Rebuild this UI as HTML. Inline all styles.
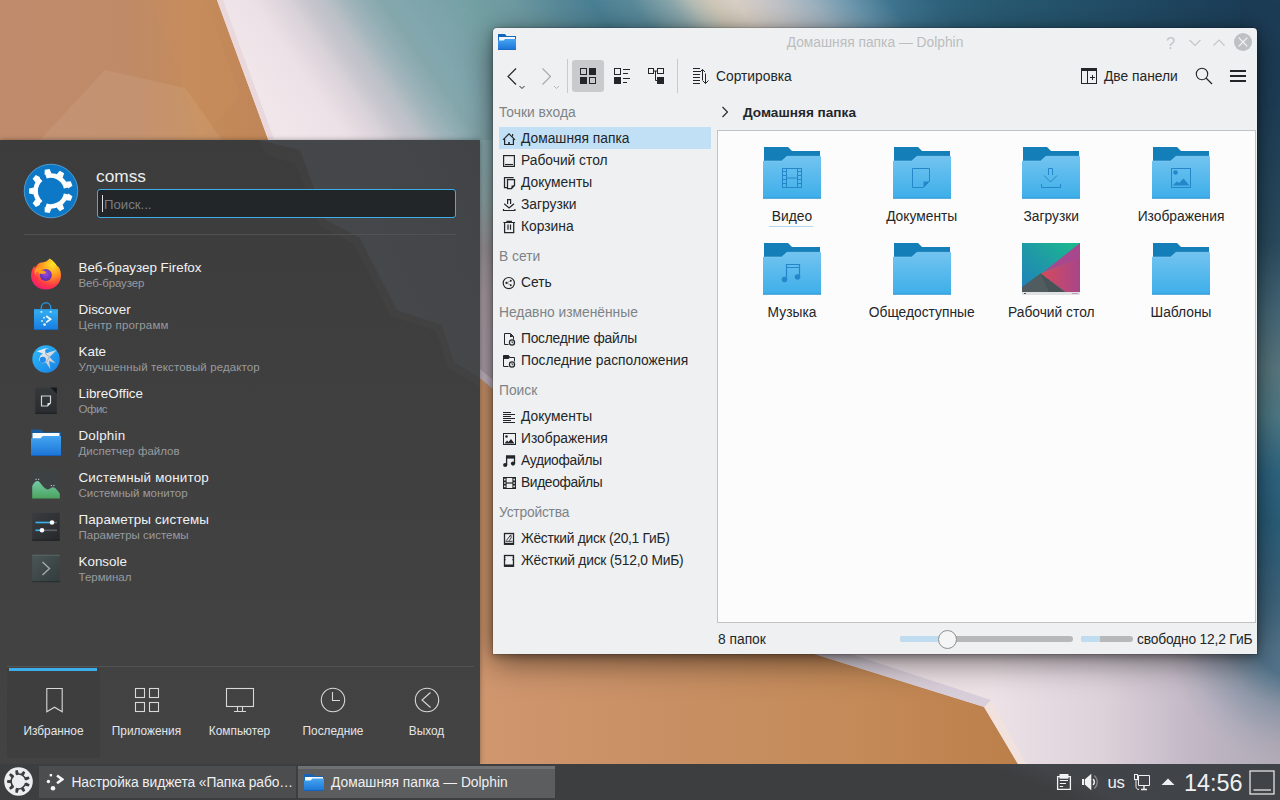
<!DOCTYPE html>
<html lang="ru">
<head>
<meta charset="utf-8">
<title>Домашняя папка — Dolphin</title>
<style>
*{box-sizing:border-box;margin:0;padding:0}
html,body{width:1280px;height:800px;overflow:hidden;background:#c08a60}
body{font-family:"Liberation Sans","DejaVu Sans",sans-serif;font-size:13.8px;color:#232629;position:relative}
.abs{position:absolute;white-space:nowrap}
#wall{position:absolute;left:0;top:0;width:1280px;height:800px}
/* ---------- Dolphin window ---------- */
#win{position:absolute;left:493px;top:28px;width:764px;height:626px;background:#eff0f1;border-radius:4px 4px 0 0;box-shadow:0 7px 32px rgba(0,0,0,.55),0 2px 9px rgba(0,0,0,.32),0 0 0 1px rgba(0,0,0,.10)}
#title{position:absolute;left:0;top:0;width:764px;height:30px;text-align:center;line-height:30px;color:#bbbdbf;font-size:13.8px}
.side-h{position:absolute;left:6px;color:#7d8387;height:18px;line-height:20px;white-space:nowrap}
.side-i{position:absolute;left:6px;width:212px;height:22px;line-height:24px;padding-left:22px;white-space:nowrap}
.side-i.sel{background:#c2e0f5}
.side-i svg{position:absolute;left:2px;top:4px;width:16px;height:16px}
#view{position:absolute;left:224px;top:102px;width:539px;height:493px;background:#fcfcfc;border:1px solid #c0c2c4}
.fi{position:absolute;width:130px;height:96px;text-align:center;white-space:nowrap}
.fi svg{display:block;margin:0 auto}
.fi span{position:absolute;left:0;right:0;top:69px;line-height:18px}
.fi .ul{position:absolute;left:42px;width:44px;top:87px;height:1px;background:#b3d7f1}
.tb{position:absolute}
/* ---------- Kickoff menu ---------- */
#menu{position:absolute;left:0;top:140px;width:480px;height:624px;background:linear-gradient(180deg,#3c3c3d 0,#404040 50%,#434343 100%);color:#eff0f1;overflow:hidden;box-shadow:0 0 5px rgba(0,0,0,.35)}
.app{position:absolute;left:30px;height:42px;white-space:nowrap}
.app .t{position:absolute;left:48.5px;top:5.5px;line-height:17px;font-size:13.4px;color:#f1f2f3}
.app .s{position:absolute;left:48.5px;top:22.8px;line-height:15px;font-size:11.5px;color:#989b9e}
.app svg{position:absolute;left:0;top:5px;width:32px;height:32px}
.tab{position:absolute;top:531px;width:93px;height:87px;text-align:center;font-size:11.85px;color:#e4e5e6}
.tab span{position:absolute;left:-10px;right:-10px;top:52px;line-height:16px}
.tab svg{position:absolute;left:30.500px;top:13px;width:32px;height:32px}
/* ---------- Panel ---------- */
#panel{position:absolute;left:0;top:764px;width:1280px;height:36px;background:linear-gradient(21.8deg,#3d3e3f 0,#3d3e3f 78.5%,#414449 82%,#3f4247 100%);color:#eff0f1}
.task{position:absolute;top:2px;height:32px;width:257px;line-height:33px;font-size:13.8px;white-space:nowrap;overflow:hidden;color:#eff0f1}
.task span{position:absolute;left:33px;top:0}

</style>
</head>
<body>
<svg id="wall" viewBox="0 0 1280 800">
<defs>
<linearGradient id="gTop" gradientUnits="userSpaceOnUse" x1="190" y1="0" x2="921.5" y2="-512.1">
<stop offset="0.005" stop-color="#f1e7eb"/><stop offset="0.055" stop-color="#ece1e6"/><stop offset="0.089" stop-color="#d9d2d9"/><stop offset="0.107" stop-color="#c7c5cd"/><stop offset="0.124" stop-color="#bbc0c7"/><stop offset="0.141" stop-color="#a3b6bc"/><stop offset="0.158" stop-color="#92aeb4"/><stop offset="0.176" stop-color="#84a7ac"/><stop offset="0.193" stop-color="#82a7ae"/><stop offset="0.226" stop-color="#7ba3a9"/><stop offset="0.259" stop-color="#73a0a3"/><stop offset="0.294" stop-color="#6e9aa2"/><stop offset="0.330" stop-color="#5a8c9a"/><stop offset="0.367" stop-color="#4a8094"/><stop offset="0.404" stop-color="#5a8a9a"/><stop offset="0.440" stop-color="#8aa7ab"/><stop offset="0.459" stop-color="#b5bdb5"/><stop offset="0.477" stop-color="#cfc8b8"/><stop offset="0.5" stop-color="#d9d0c5"/><stop offset="0.532" stop-color="#c5c5c8"/><stop offset="0.569" stop-color="#9fb3c0"/><stop offset="0.606" stop-color="#6b97ae"/><stop offset="0.642" stop-color="#3f7590"/><stop offset="0.688" stop-color="#2f627c"/><stop offset="0.734" stop-color="#285a72"/><stop offset="0.826" stop-color="#234f68"/><stop offset="0.917" stop-color="#1e435c"/><stop offset="0.991" stop-color="#1b3a55"/>
</linearGradient>
<linearGradient id="gRight" x1="0" y1="0" x2="0" y2="1">
<stop offset="0" stop-color="#1c3b55"/><stop offset="0.13" stop-color="#1e3f58"/><stop offset="0.3" stop-color="#2a4c60"/>
<stop offset="0.39" stop-color="#456878"/><stop offset="0.46" stop-color="#5a7880"/><stop offset="0.52" stop-color="#4e7a86"/>
<stop offset="0.59" stop-color="#2f6682"/><stop offset="0.65" stop-color="#2a5f7b"/><stop offset="0.70" stop-color="#33607a"/>
<stop offset="0.75" stop-color="#3d647c"/><stop offset="0.81" stop-color="#52738a"/><stop offset="0.85" stop-color="#5a788e"/><stop offset="0.915" stop-color="#8a98a8"/>
<stop offset="0.97" stop-color="#b5a8b0"/><stop offset="1" stop-color="#c0b0b5"/>
</linearGradient>
<linearGradient id="gBot" gradientUnits="userSpaceOnUse" x1="990" y1="0" x2="1290" y2="0">
<stop offset="0" stop-color="#ede2e6"/><stop offset="0.2" stop-color="#e4d9e0"/><stop offset="0.37" stop-color="#ddd2da"/>
<stop offset="0.53" stop-color="#cfc5d0"/><stop offset="0.7" stop-color="#c0b6c4"/><stop offset="0.87" stop-color="#b5aebb"/><stop offset="1" stop-color="#b2a9b4"/>
</linearGradient>
<radialGradient id="gBlu" gradientUnits="userSpaceOnUse" cx="1300" cy="630" r="135">
<stop offset="0" stop-color="#52738a" stop-opacity="1"/><stop offset="0.36" stop-color="#52738a" stop-opacity="1"/><stop offset="0.6" stop-color="#5d7b90" stop-opacity=".45"/><stop offset="0.85" stop-color="#62809a" stop-opacity=".1"/><stop offset="1" stop-color="#62809a" stop-opacity="0"/>
</radialGradient>
<linearGradient id="gOr" gradientUnits="userSpaceOnUse" x1="0" y1="0" x2="260" y2="0">
<stop offset="0" stop-color="#c08b6d"/><stop offset="0.5" stop-color="#bf8a66"/><stop offset="0.75" stop-color="#c48b5b"/><stop offset="1" stop-color="#c18657"/>
</linearGradient>
<linearGradient id="gOr2" gradientUnits="userSpaceOnUse" x1="480" y1="0" x2="1020" y2="0">
<stop offset="0" stop-color="#d0976f"/><stop offset="0.35" stop-color="#c88f64"/><stop offset="0.7" stop-color="#c48a58"/><stop offset="1" stop-color="#bb7f4a"/>
</linearGradient>
<linearGradient id="gMid" gradientUnits="userSpaceOnUse" x1="0" y1="140" x2="0" y2="380">
<stop offset="0" stop-color="#8cb0b4"/><stop offset="0.25" stop-color="#93abad"/><stop offset="0.45" stop-color="#a09a9e"/><stop offset="0.65" stop-color="#b0a3aa"/><stop offset="1" stop-color="#b5a6b0"/>
</linearGradient>
</defs>
<rect x="0" y="0" width="1280" height="800" fill="url(#gTop)"/>
<rect x="1240" y="0" width="40" height="800" fill="url(#gRight)"/>
<polygon points="700,648 1280,648 1280,800 700,800" fill="url(#gBot)"/>
<rect x="1100" y="648" width="180" height="152" fill="url(#gBlu)"/>
<rect x="470" y="140" width="30" height="260" fill="url(#gMid)"/>
<polygon points="0,0 217,0 268,139 300,230.5 817,655 984,707 1023,772 1023,800 0,800" fill="url(#gOr)"/>
<polygon points="40,140 105,70 185,88 222,140" fill="#fff" opacity=".07"/>
<polygon points="150,0 205,0 240,95 200,140 175,60" fill="#e0a060" opacity=".10"/>
<polygon points="470,370 817,655 984,707 1023,772 1023,800 470,800" fill="url(#gOr2)"/>
<polygon points="460,352.8 500,385.7 500,394.7 460,361.8" fill="#cdbecb"/>
<polygon points="217,0 223,0 274,139 268,139" fill="#ead9dc"/>
<polygon points="984,707 1019,766 1027,766 991,700" fill="#f1e2de"/>
<polygon points="768,640 817,655 984,707 991,700 808,640" fill="#d9cfda"/>
</svg>
<svg width="0" height="0" style="position:absolute">
<defs>
<linearGradient id="fg" x1="0" y1="0" x2="0" y2="1"><stop offset="0" stop-color="#72c4f0"/><stop offset="1" stop-color="#3daee9"/></linearGradient>
<linearGradient id="dg" x1="0" y1="1" x2="1" y2="0"><stop offset="0" stop-color="#1f7fbf"/><stop offset=".5" stop-color="#1f9aa5"/><stop offset="1" stop-color="#1abc8c"/></linearGradient>
<linearGradient id="dr" x1="0" y1="0" x2="1" y2="0"><stop offset="0" stop-color="#d64a5a"/><stop offset="1" stop-color="#a8468a"/></linearGradient>
<linearGradient id="dfg" x1="0" y1="0" x2="0" y2="1"><stop offset="0" stop-color="#45a5f3"/><stop offset="1" stop-color="#1b74d6"/></linearGradient>
</defs>
</svg>
<div id="win">
<div id="title">Домашняя папка — Dolphin</div>
<!-- window icon -->
<svg class="tb" style="left:4px;top:5px" width="20" height="18" viewBox="0 0 20 18"><path d="M1 1h7l1.5 2H19v6H1z" fill="#1466b8"/><path d="M2 4h16v4H2z" fill="#f4f6f8"/><path d="M1 7.400h5.700l1.3-1.300H19V16.800H1z" fill="url(#dfg)"/><path d="M1 16h18v.8H1z" fill="#1462c0"/></svg>
<!-- title buttons -->
<svg class="tb" style="left:668px;top:5px" width="96" height="20" viewBox="0 0 96 20"><text x="9.5" y="15.5" font-family="Liberation Sans, sans-serif" font-size="16.5" fill="#c4c6c8" text-anchor="middle">?</text><path d="M28.5 7l5.5 5.5 5.5-5.5" fill="none" stroke="#c4c6c8" stroke-width="1.2"/><path d="M52.5 12.5 58 7l5.5 5.5" fill="none" stroke="#c4c6c8" stroke-width="1.2"/><circle cx="82" cy="9" r="9" fill="#bec1c3"/><path d="M77.7 4.700l8.6 8.600M86.3 4.700l-8.6 8.6" stroke="#f6f7f7" stroke-width="1.1"/></svg>
<!-- back / forward -->
<svg class="tb" style="left:12px;top:38px" width="60" height="26" viewBox="0 0 60 26"><path d="M11 2.5 3 10.500l8 8" fill="none" stroke="#232629" stroke-width="1.2"/><path d="M14.5 20l2.5 2.5 2.5-2.5" fill="none" stroke="#232629" stroke-width="1"/><path d="M37.5 2.500l8 8-8 8" fill="none" stroke="#a8aaac" stroke-width="1.2"/><path d="M49 20l2.5 2.500L54 20" fill="none" stroke="#b5b7b9" stroke-width="1"/></svg>
<div class="tb" style="left:74px;top:31px;width:1px;height:34px;background:#c8cacc"></div>
<div class="tb" style="left:79px;top:32px;width:32px;height:32px;border-radius:3px;background:#c9cacb"></div>
<!-- icons view -->
<svg class="tb" style="left:87px;top:40px" width="16" height="16" viewBox="0 0 16 16"><rect x=".5" y=".5" width="6" height="6" fill="none" stroke="#232629"/><rect x="9" y="0" width="7" height="7" fill="#232629"/><rect x="0" y="9" width="7" height="7" fill="#232629"/><rect x="9.5" y="9.5" width="6" height="6" fill="none" stroke="#232629"/></svg>
<!-- details view -->
<svg class="tb" style="left:121px;top:40px" width="17" height="16" viewBox="0 0 17 16"><rect x=".5" y=".5" width="6" height="6" fill="none" stroke="#232629"/><rect x="0" y="9" width="7" height="7" fill="#232629"/><path d="M9 1.500h7M9 5.500h5M9 10.500h7M9 14.500h4" stroke="#232629"/></svg>
<!-- tree view -->
<svg class="tb" style="left:155px;top:40px" width="17" height="16" viewBox="0 0 17 16"><rect x=".5" y=".5" width="5" height="5" fill="none" stroke="#232629"/><rect x="9.5" y=".5" width="6" height="5" fill="none" stroke="#232629"/><rect x="9" y="9" width="7" height="7" fill="#232629"/><path d="M6 3h3.500M7.5 3v9.500H9" fill="none" stroke="#232629"/></svg>
<div class="tb" style="left:184px;top:31px;width:1px;height:34px;background:#c8cacc"></div>
<!-- sort -->
<svg class="tb" style="left:200px;top:40px" width="17" height="17" viewBox="0 0 17 17"><path d="M0 .5h7M0 3.500h7M0 6.500h7M0 9.500h7M0 12.500h7M0 15.500h7" stroke="#232629" stroke-width="1"/><path d="M9.5 1.500v10.500M7 4l2.5-2.500L12 4" fill="none" stroke="#232629"/><path d="M12.5 5.500V15.500M9.5 12.500l3 3 3-3" fill="none" stroke="#232629"/></svg>
<span class="abs" style="left:223px;top:40px;line-height:18px">Сортировка</span>
<!-- two panels -->
<svg class="tb" style="left:588px;top:40px" width="16" height="16" viewBox="0 0 16 16"><rect x=".5" y=".5" width="15" height="15" fill="none" stroke="#232629"/><path d="M0 0h16v3H0z" fill="#232629"/><path d="M6.5 3v13" stroke="#232629"/><path d="M9 9.500h5M11.5 7v5" stroke="#232629"/></svg>
<span class="abs" style="left:611px;top:40px;line-height:18px">Две панели</span>
<!-- search -->
<svg class="tb" style="left:702px;top:39px" width="18" height="18" viewBox="0 0 18 18"><circle cx="7" cy="7" r="5.7" fill="none" stroke="#232629" stroke-width="1.1"/><path d="M11 11l6 6" stroke="#232629" stroke-width="1.3"/></svg>
<!-- hamburger -->
<svg class="tb" style="left:737px;top:41px" width="16" height="14" viewBox="0 0 16 14"><path d="M0 2h16M0 7h16M0 12h16" stroke="#232629" stroke-width="2"/></svg>
<!-- breadcrumb -->
<svg class="tb" style="left:228px;top:78px" width="8" height="12" viewBox="0 0 8 12"><path d="M1.5 1l5 5-5 5" fill="none" stroke="#232629" stroke-width="1.1"/></svg>
<span class="abs" style="left:250px;top:76px;line-height:18px;font-weight:bold;font-size:13.6px">Домашняя папка</span>

<div class="side-h" style="top:75px">Точки входа</div>
<div class="side-i sel" style="top:99px"><svg viewBox="0 0 16 16"><path d="M2 8.8 8 2.800l6 6" fill="none" stroke="#232629" stroke-width="1.2"/><path d="M3.6 7.800v5.700h8.800V7.8" fill="none" stroke="#232629" stroke-width="1.2"/><path d="M7.2 13.500v-2.500h1.600v2.500z" fill="#232629"/><path d="M11.6 3v2.6" stroke="#232629" stroke-width="1.1"/></svg>Домашняя папка</div>
<div class="side-i" style="top:121px"><svg viewBox="0 0 16 16"><rect x="2.6" y="2.6" width="10.8" height="10.8" fill="none" stroke="#232629" stroke-width="1.2"/><path d="M4 11.500h8" stroke="#232629" stroke-width="1.1"/></svg>Рабочий стол</div>
<div class="side-i" style="top:143px"><svg viewBox="0 0 16 16"><path d="M12.6 2.500H3.500v10h2.5" fill="none" stroke="#232629" stroke-width="1.250"/><path d="M6.5 4.500h7v6l-3 3h-4z" fill="none" stroke="#232629" stroke-width="1.250"/><path d="M13.5 10.500h-3v3z" fill="#232629"/></svg>Документы</div>
<div class="side-i" style="top:165px"><svg viewBox="0 0 16 16"><path d="M6.6 7V2.600h3V7" fill="none" stroke="#232629" stroke-width="1.2"/><path d="M3.2 6.7 8.1 11l4.9-4.3" fill="none" stroke="#232629" stroke-width="1.250"/><path d="M2.5 12v1.500h11.400V12" fill="none" stroke="#232629" stroke-width="1.2"/></svg>Загрузки</div>
<div class="side-i" style="top:187px"><svg viewBox="0 0 16 16"><path d="M3.6 3.500v10h9.100v-10" fill="none" stroke="#232629" stroke-width="1.250"/><path d="M2.4 3.500H14M6 3.500V2.300h4.300v1.2" fill="none" stroke="#232629" stroke-width="1.2"/><path d="M7 5.500v5.200M9.5 5.500v5.2" fill="none" stroke="#232629" stroke-width="1.2"/></svg>Корзина</div>
<div class="side-h" style="top:219px">В сети</div>
<div class="side-i" style="top:243px"><svg viewBox="0 0 16 16"><circle cx="7.8" cy="8.1" r="5.6" fill="none" stroke="#232629" stroke-width="1.2"/><circle cx="5.4" cy="7.9" r="1.050" fill="#232629"/><circle cx="9.8" cy="5.8" r=".95" fill="#232629"/><circle cx="9.8" cy="10.2" r=".95" fill="#232629"/><path d="M5.4 7.9 9.8 5.800M5.4 7.9 9.8 10.2" stroke="#232629" stroke-width=".45"/></svg>Сеть</div>
<div class="side-h" style="top:275px">Недавно изменённые</div>
<div class="side-i" style="top:299px;letter-spacing:-0.24px"><svg viewBox="0 0 16 16"><path d="M3.5 13.500v-11h6l3 3v3" fill="none" stroke="#232629"/><path d="M9 2.500v3.500h3.500z" fill="#232629"/><path d="M3.5 13.500h4" stroke="#232629"/><circle cx="11" cy="11.5" r="2.6" fill="none" stroke="#232629" stroke-width="1.2"/><path d="M11 10v1.700h1.4" fill="none" stroke="#232629" stroke-width=".8"/></svg>Последние файлы</div>
<div class="side-i" style="top:321px"><svg viewBox="0 0 16 16"><path d="M2.5 13.500v-11h5l1.5 2h4.500v4" fill="none" stroke="#232629"/><path d="M2.5 2.500h5l1.5 2-1.5 1.500h-5z" fill="#232629"/><path d="M2.5 13.500h5" stroke="#232629"/><circle cx="11" cy="11.5" r="2.6" fill="none" stroke="#232629" stroke-width="1.2"/><path d="M11 10v1.700h1.4" fill="none" stroke="#232629" stroke-width=".8"/></svg>Последние расположения</div>
<div class="side-h" style="top:353px">Поиск</div>
<div class="side-i" style="top:377px"><svg viewBox="0 0 16 16"><path d="M2 3.500h8M2 5.500h12M2 7.500h8M2 9.500h12M2 11.500h8M2 13.500h12" stroke="#232629" stroke-width="1"/></svg>Документы</div>
<div class="side-i" style="top:399px"><svg viewBox="0 0 16 16"><rect x="2.5" y="2.5" width="12" height="11" fill="none" stroke="#232629"/><circle cx="5.5" cy="5.5" r="1.3" fill="#232629"/><path d="M3.5 12.500l2.5-3 1.5 1.5 2.5-3 3.5 4.500z" fill="#232629"/></svg>Изображения</div>
<div class="side-i" style="top:421px;letter-spacing:-0.28px"><svg viewBox="0 0 16 16"><path d="M5.6 12V3h7.900v7.5" fill="none" stroke="#232629" stroke-width="1.3"/><path d="M5.5 3h8v2.600h-8z" fill="#232629"/><circle cx="4.2" cy="12" r="2.1" fill="#232629"/><circle cx="12" cy="10.6" r="2.1" fill="#232629"/></svg>Аудиофайлы</div>
<div class="side-i" style="top:443px;letter-spacing:-0.37px"><svg viewBox="0 0 16 16"><rect x="2.5" y="2.5" width="12" height="11" fill="none" stroke="#232629"/><path d="M2 2h3.600v12H2zM11.4 2H15v12h-3.600z" fill="#232629"/><path d="M5 8h7" stroke="#232629" stroke-width="1.2"/><path d="M3.1 3.800h1.500v1.600H3.100zM3.1 7.200h1.500v1.600H3.100zM3.1 10.600h1.500v1.600H3.100zM12.4 3.800h1.500v1.600h-1.500zM12.4 7.200h1.500v1.600h-1.500zM12.4 10.600h1.500v1.600h-1.500z" fill="#eff0f1"/></svg>Видеофайлы</div>
<div class="side-h" style="top:475px;letter-spacing:-0.2px">Устройства</div>
<div class="side-i" style="top:499px;letter-spacing:-0.27px"><svg viewBox="0 0 16 16"><rect x="3.5" y="2.5" width="9" height="10.8" fill="none" stroke="#232629" stroke-width="1.3"/><path d="M3.5 11.800h9v1.500h-9z" fill="#232629"/><path d="M5.3 9.6 9.8 3.800l.4 3-2 3" fill="none" stroke="#232629" stroke-width=".9"/><path d="M4.5 10.300h7" stroke="#232629" stroke-width=".9"/></svg>Жёсткий диск (20,1 ГиБ)</div>
<div class="side-i" style="top:521px;letter-spacing:-0.2px"><svg viewBox="0 0 16 16"><rect x="3.5" y="2.5" width="9" height="10.8" fill="none" stroke="#232629" stroke-width="1.3"/><path d="M3.5 11.500h9v1.800h-9z" fill="#232629"/><path d="M3.5 6.800h1.300M11.2 6.800h1.300M3.5 4.200h1M11.5 4.200h1" stroke="#232629" stroke-width="1.1"/></svg>Жёсткий диск (512,0 МиБ)</div>
<div id="view">
<div class="fi" style="left:9.0px;top:8px"><svg width="64" height="64" viewBox="0 0 64 64"><path d="M4 8h24l4 4h28v20H4z" fill="#147eb8"/><path d="M3 22h18.600l5.4-4.700h34V59.600H3z" fill="url(#fg)"/><path d="M3 22h18.600l5.4-4.700h34" fill="none" stroke="#8fd2f6" stroke-width=".8" opacity=".7"/><path d="M3 59.100h58" stroke="#3298d3" stroke-width="1"/><g fill="none" stroke="#2587c9" stroke-width="1"><rect x="22.5" y="29.5" width="19" height="19"/><path d="M26.5 29.500v19M37.5 29.500v19M26.5 39h11"/><path d="M23 32.500h3M23 36.500h3M23 40.500h3M23 44.500h3M38 32.500h3M38 36.500h3M38 40.500h3M38 44.500h3" stroke-width="1"/></g></svg><span>Видео</span><i class="ul"></i></div>
<div class="fi" style="left:138.7px;top:8px"><svg width="64" height="64" viewBox="0 0 64 64"><path d="M4 8h24l4 4h28v20H4z" fill="#147eb8"/><path d="M3 22h18.600l5.4-4.700h34V59.600H3z" fill="url(#fg)"/><path d="M3 22h18.600l5.4-4.700h34" fill="none" stroke="#8fd2f6" stroke-width=".8" opacity=".7"/><path d="M3 59.100h58" stroke="#3298d3" stroke-width="1"/><path d="M22.5 29.500h17v13l-6 6h-11z" fill="none" stroke="#2587c9"/><path d="M39.5 42.500h-6v6z" fill="#2587c9"/></svg><span>Документы</span></div>
<div class="fi" style="left:268.3px;top:8px"><svg width="64" height="64" viewBox="0 0 64 64"><path d="M4 8h24l4 4h28v20H4z" fill="#147eb8"/><path d="M3 22h18.600l5.4-4.700h34V59.600H3z" fill="url(#fg)"/><path d="M3 22h18.600l5.4-4.700h34" fill="none" stroke="#8fd2f6" stroke-width=".8" opacity=".7"/><path d="M3 59.100h58" stroke="#3298d3" stroke-width="1"/><g fill="none" stroke="#2587c9" stroke-width="1"><path d="M29.5 36v-6.500h4V36"/><path d="M25 36.500l6.5 6.5 6.5-6.5"/><path d="M22.5 45v3.500h19V45"/></g></svg><span>Загрузки</span></div>
<div class="fi" style="left:398.0px;top:8px"><svg width="64" height="64" viewBox="0 0 64 64"><path d="M4 8h24l4 4h28v20H4z" fill="#147eb8"/><path d="M3 22h18.600l5.4-4.700h34V59.600H3z" fill="url(#fg)"/><path d="M3 22h18.600l5.4-4.700h34" fill="none" stroke="#8fd2f6" stroke-width=".8" opacity=".7"/><path d="M3 59.100h58" stroke="#3298d3" stroke-width="1"/><rect x="22.5" y="29.5" width="19" height="19" fill="none" stroke="#2587c9"/><circle cx="26.5" cy="33.5" r="2.3" fill="#2587c9"/><path d="M23.5 46.500l4.5-4 2 1.5 4.5-4.5 6 7z" fill="#2587c9"/></svg><span>Изображения</span></div>
<div class="fi" style="left:9.0px;top:104px"><svg width="64" height="64" viewBox="0 0 64 64"><path d="M4 8h24l4 4h28v20H4z" fill="#147eb8"/><path d="M3 22h18.600l5.4-4.700h34V59.600H3z" fill="url(#fg)"/><path d="M3 22h18.600l5.4-4.700h34" fill="none" stroke="#8fd2f6" stroke-width=".8" opacity=".7"/><path d="M3 59.100h58" stroke="#3298d3" stroke-width="1"/><path d="M26.5 43V29.500h13V41" fill="none" stroke="#2587c9" stroke-width="1.2"/><path d="M26.5 32.500h13" stroke="#2587c9" stroke-width="1"/><circle cx="24.5" cy="44.5" r="2.8" fill="#2587c9"/><circle cx="37.5" cy="42" r="2.8" fill="#2587c9"/></svg><span>Музыка</span></div>
<div class="fi" style="left:138.7px;top:104px"><svg width="64" height="64" viewBox="0 0 64 64"><path d="M4 8h24l4 4h28v20H4z" fill="#147eb8"/><path d="M3 22h18.600l5.4-4.700h34V59.600H3z" fill="url(#fg)"/><path d="M3 22h18.600l5.4-4.700h34" fill="none" stroke="#8fd2f6" stroke-width=".8" opacity=".7"/><path d="M3 59.100h58" stroke="#3298d3" stroke-width="1"/></svg><span>Общедоступные</span></div>
<div class="fi" style="left:268.3px;top:104px"><svg width="64" height="64" viewBox="0 0 64 64"><rect x="3" y="8" width="58" height="52" fill="url(#dg)"/><path d="M61 8v15L24.5 37z" fill="#a8478e"/><path d="M61 22.500v34.500H46L21.5 38.500z" fill="url(#dr)"/><path d="M3 52l18.5-13.500L46 57H3z" fill="#505c60"/><path d="M21.5 38.5 46 57H30z" fill="#475357"/><rect x="3" y="57" width="58" height="3" fill="#dfe1e3"/><rect x="5" y="58" width="2" height="1" fill="#555"/><rect x="53" y="58" width="6" height="1" fill="#c0a0b8"/></svg><span>Рабочий стол</span></div>
<div class="fi" style="left:398.0px;top:104px"><svg width="64" height="64" viewBox="0 0 64 64"><path d="M4 8h24l4 4h28v20H4z" fill="#147eb8"/><path d="M3 22h18.600l5.4-4.700h34V59.600H3z" fill="url(#fg)"/><path d="M3 22h18.600l5.4-4.700h34" fill="none" stroke="#8fd2f6" stroke-width=".8" opacity=".7"/><path d="M3 59.100h58" stroke="#3298d3" stroke-width="1"/></svg><span>Шаблоны</span></div>
</div>
<div id="status">
<span class="abs" style="left:225px;top:604px">8 папок</span>
<div class="abs" style="left:407px;top:608px;width:173px;height:6px;border-radius:3px;background:#b6b8b9"></div>
<div class="abs" style="left:407px;top:608px;width:47px;height:6px;border-radius:3px 0 0 3px;background:#bfdcf1"></div>
<div class="abs" style="left:445px;top:602px;width:18.500px;height:18.500px;border-radius:10px;background:#f5f5f6;border:1px solid #8e9092"></div>
<div class="abs" style="left:588px;top:608px;width:52px;height:6px;border-radius:3px;background:#b6b8b9"></div>
<div class="abs" style="left:588px;top:608px;width:19px;height:6px;border-radius:3px 0 0 3px;background:#bfdcf1"></div>
<span class="abs" style="left:644px;top:604px;letter-spacing:-.18px">свободно 12,2 ГиБ</span>
</div>
</div>
<div id="menu">
<!-- translucent wallpaper hint -->
<svg class="abs" style="left:0;top:0" width="480" height="624" viewBox="0 140 480 624"><defs><linearGradient id="mg" x1="0" y1="0" x2="1" y2="0"><stop offset="0" stop-color="#8aa2ba" stop-opacity=".11"/><stop offset=".55" stop-color="#8aa2ba" stop-opacity=".10"/><stop offset="1" stop-color="#86a8b8" stop-opacity=".07"/></linearGradient></defs>
<path d="M259 140l41 10 26 70 34 18 37 72 45 15 12 37 26 16V140z" fill="url(#mg)"/>
<path d="M259 140l41 10 26 70 34 18 37 72 45 15 12 37 26 16v9l-32-19-12-37-45-15-37-72-34-18-24-62-30-9z" fill="#fff" opacity=".02"/>
</svg>
<!-- avatar -->
<svg class="abs" style="left:23px;top:23px" width="56" height="56" viewBox="-28 -28 56 56">
<circle r="26.8" fill="#0d79c6" stroke="#5aa9de" stroke-width=".8"/>
<path d="M-10.10 11.62A15.40 15.40 0 0 1 -10.10 -11.62" fill="none" stroke="#fff" stroke-width="4.60"/><path d="M-5.01 -14.56A15.40 15.40 0 0 1 15.12 -2.94" fill="none" stroke="#fff" stroke-width="4.60"/><path d="M15.12 2.94A15.40 15.40 0 0 1 -5.01 14.56" fill="none" stroke="#fff" stroke-width="4.60"/><path d="M-17.10 3.50L-21.90 2.50L-21.90 -2.50L-17.10 -3.50ZM-15.35 -8.31L-18.38 -12.16L-15.17 -15.99L-10.85 -13.67ZM-6.42 -16.23L-6.26 -21.13L-1.34 -22.00L0.48 -17.45ZM5.52 -16.56L8.78 -20.22L13.12 -17.72L11.58 -13.06ZM14.87 -9.14L19.72 -9.84L21.43 -5.14L17.27 -2.56ZM17.27 2.56L21.43 5.14L19.72 9.84L14.87 9.14ZM11.58 13.06L13.12 17.72L8.78 20.22L5.52 16.56ZM0.48 17.45L-1.34 22.00L-6.26 21.13L-6.42 16.23ZM-10.85 13.67L-15.17 15.99L-18.38 12.16L-15.35 8.31Z" fill="#fff"/>
</svg>
<span class="abs" style="left:96px;top:25px;font-size:17.300px;line-height:22px;color:#ecedee">comss</span>
<div class="abs" style="left:97px;top:49px;width:358.500px;height:28.500px;border:1.500px solid #3daee9;border-radius:3px;background:#232629"></div>
<div class="abs" style="left:102px;top:54.500px;width:1px;height:17.500px;background:#dfe0e1"></div>
<span class="abs" style="left:104px;top:55.500px;line-height:18px;color:#7b7e81;font-size:13.200px">Поиск...</span>
<div class="abs" style="left:24px;top:94px;width:432px;height:1px;background:#505254"></div>

<!-- Firefox -->
<div class="app" style="top:113px"><svg viewBox="0 0 32 32"><defs><radialGradient id="ff1" cx=".7" cy=".2" r="1"><stop offset="0" stop-color="#ffe226"/><stop offset=".35" stop-color="#ff9a1f"/><stop offset=".68" stop-color="#ff3647"/><stop offset=".95" stop-color="#ee1580"/></radialGradient><radialGradient id="ff2" cx=".5" cy=".4" r=".6"><stop offset="0" stop-color="#9a4bdc"/><stop offset="1" stop-color="#5b2bb0"/></radialGradient></defs>
<path d="M16 3.500c2-1 3.5-3 3.5-3s5 3 7.5 7.500c2.5 1 4 5 4 9.5 0 8-6.5 14-15 14S1 25.5 1 17.500c0-4 1.5-7.5 3.5-9.5 0 1 .5 2 .5 2s2-4.5 6-5.500c1.5 0 3.5-.5 5-1z" fill="url(#ff1)"/>
<circle cx="15.8" cy="17" r="6" fill="url(#ff2)"/>
<path d="M5 12c2-3 6-4 9-2.5-2 .5-3 2-3 3.5 2-1 5 0 5 2-3 2-8 1-9-2-1 1-1 3-.5 4.500C4.5 15.5 4 13.5 5 12z" fill="#ff9d1c"/>
<path d="M19.5.5s5 3 7.5 7.500c-2-1-4-1-4-1s-1-3.5-3.5-6.500z" fill="#ffde2b"/>
</svg><span class="t">Веб-браузер Firefox</span><span class="s" style="letter-spacing:-0.15px">Веб-браузер</span></div>
<!-- Discover -->
<div class="app" style="top:155px"><svg viewBox="0 0 32 32"><defs><linearGradient id="dc" x1="0" y1="0" x2="0" y2="1"><stop offset="0" stop-color="#36b0f2"/><stop offset="1" stop-color="#167be0"/></linearGradient></defs>
<path d="M11.3 9.500V7.500a4.7 4.7 0 0 1 9.4 0v2" fill="none" stroke="#2590d6" stroke-width="1.5"/>
<path d="M4 9h24v21H4z" fill="url(#dc)"/><path d="M4 9h24v1.500H4z" fill="#2a93dc" opacity=".7"/><path d="M4 29h24v1H4z" fill="#1468c0"/>
<rect x="10.5" y="11" width="1.8" height="1.8" fill="#bfe3fa"/><rect x="19.8" y="11" width="1.8" height="1.8" fill="#bfe3fa"/>
<path d="M16.2 16l4.3 3.2-4.3 3.2" fill="none" stroke="#f2fafe" stroke-width="1.8"/><circle cx="14" cy="17.8" r="1" fill="#cfeafc"/><circle cx="12" cy="21" r="1" fill="#cfeafc"/><circle cx="14.6" cy="24.6" r="1.4" fill="#dff1fd"/>
</svg><span class="t">Discover</span><span class="s" style="letter-spacing:0.15px">Центр программ</span></div>
<!-- Kate -->
<div class="app" style="top:197px"><svg viewBox="0 0 32 32"><defs><linearGradient id="kt" x1="0" y1="0" x2="1" y2="1"><stop offset="0" stop-color="#2cbcf8"/><stop offset="1" stop-color="#1a7fe6"/></linearGradient><linearGradient id="kb" x1="0" y1="0" x2="1" y2="1"><stop offset="0" stop-color="#f4f6f8"/><stop offset="1" stop-color="#b4bcc6"/></linearGradient></defs>
<circle cx="16" cy="17" r="13.7" fill="url(#kt)"/>
<path d="M6.8 9.3 15.5 6.300l3.1.5L15 11.400l11.8-3.3-7.2 6.9 6.1 6.4-6.6-2.3 1.3 8.2-4.4-6.7-3.6 1L8.8 18l1.6-4.6 2.5-2z" fill="url(#kb)"/>
<circle cx="17" cy="9" r="1.9" fill="#1f96ee"/><circle cx="12.8" cy="17.8" r="3.1" fill="#1d8cec"/>
<path d="M15 11.400l4.6 3.6-3.6 5.6" fill="none" stroke="#9aa6b2" stroke-width=".8"/>
</svg><span class="t">Kate</span><span class="s" style="letter-spacing:0.12px">Улучшенный текстовый редактор</span></div>
<!-- LibreOffice -->
<div class="app" style="top:239px"><svg viewBox="0 0 32 32"><defs><linearGradient id="lo" x1="0" y1="0" x2="0" y2="1"><stop offset="0" stop-color="#36393c"/><stop offset="1" stop-color="#292b2e"/></linearGradient></defs><path d="M5.2 3.500h21.600v26.300H5.200z" fill="url(#lo)"/><path d="M20.5 3.500h6.300v6.300z" fill="#17181a"/><path d="M11.5 12h9v7l-3 3h-6z" fill="none" stroke="#d4d6d8" stroke-width="1.2"/><path d="M20.5 19h-3v3z" fill="#e8e9ea"/><path d="M5.2 28.800h21.600v1H5.200z" fill="#1e2022"/></svg><span class="t">LibreOffice</span><span class="s" style="letter-spacing:-0.5px">Офис</span></div>
<!-- Dolphin -->
<div class="app" style="top:281px"><svg viewBox="0 0 32 32"><path d="M1 3.500h10.500l2.5 2.800H31V16H1z" fill="#1a5c9c"/><path d="M2.5 7h27v8h-27z" fill="#f8fafb"/><path d="M2.5 13h27v2h-27z" fill="#d5dde5"/><path d="M1 12.300h9.500l2.3-2.300H31V30H1z" fill="url(#dfg)"/><path d="M1 29h30v1H1z" fill="#1660b8"/></svg><span class="t" style="letter-spacing:0.2px">Dolphin</span><span class="s">Диспетчер файлов</span></div>
<!-- System monitor -->
<div class="app" style="top:323px"><svg viewBox="0 0 32 32"><defs><linearGradient id="sm" x1="0" y1="0" x2="0" y2="1"><stop offset="0" stop-color="#74c9a6"/><stop offset="1" stop-color="#4ba35d"/></linearGradient></defs><rect x="2.2" y="2.8" width="27.6" height="27.8" fill="#3e4144"/><path d="M2.2 18C3.5 15 5.5 13 7.4 13c3.1 0 6.1 8.4 10.4 8.4 2.2 0 3.2-2.1 5.1-2.1 2.6 0 5 3.7 6.9 6.200v5.100H2.200z" fill="url(#sm)"/><path d="M5.5 11.300h1.200M8 11.300h1.200M20.8 17.600h1.200M23.3 17.600h1.2" stroke="#cfd3d5" stroke-width="1"/></svg><span class="t" style="letter-spacing:0.2px">Системный монитор</span><span class="s">Системный монитор</span></div>
<!-- System settings -->
<div class="app" style="top:365px"><svg viewBox="0 0 32 32"><defs><linearGradient id="ssg" x1="0" y1="0" x2="1" y2="1"><stop offset="0" stop-color="#3a3d40"/><stop offset="1" stop-color="#26282b"/></linearGradient></defs><rect x="2.2" y="2.8" width="27.6" height="27.8" fill="url(#ssg)"/><path d="M2.2 29.600h27.600v1H2.200z" fill="#1d1f21"/><path d="M5.5 12.500h17" stroke="#3daee9" stroke-width="1.7"/><path d="M22 12.500h5" stroke="#5b5f63" stroke-width="1.7"/><circle cx="22" cy="12.5" r="2.3" fill="#fcfcfc"/><path d="M5.5 20.300h6.5" stroke="#3daee9" stroke-width="1.7"/><path d="M12 20.300h15" stroke="#5b5f63" stroke-width="1.7"/><circle cx="12" cy="20.3" r="2.3" fill="#fcfcfc"/></svg><span class="t" style="letter-spacing:0.14px">Параметры системы</span><span class="s">Параметры системы</span></div>
<!-- Konsole -->
<div class="app" style="top:407px"><svg viewBox="0 0 32 32"><defs><linearGradient id="ko" x1="0" y1="0" x2="1" y2="1"><stop offset="0" stop-color="#4b5657"/><stop offset="1" stop-color="#333b3c"/></linearGradient></defs><rect x="2.2" y="2.8" width="27.6" height="27.4" fill="url(#ko)"/><path d="M2.2 2.800h27.600v1H2.200z" fill="#5a6566"/><path d="M2.2 29.200h27.600v1H2.200z" fill="#262c2d"/><path d="M12.5 10l7 6.5-7 6.5" fill="none" stroke="#a4aaab" stroke-width="1.4"/></svg><span class="t">Konsole</span><span class="s">Терминал</span></div>

<!-- bottom tabs -->
<div class="abs" style="left:7px;top:526px;width:467px;height:1px;background:#505254"></div>
<div class="abs" style="left:7px;top:528px;width:93px;height:90px;background:#3e3e3f"></div>
<div class="abs" style="left:9px;top:528px;width:88px;height:3px;background:#3daee9"></div>
<div class="tab" style="left:7px"><svg viewBox="0 0 32 32"><path d="M8.8 4.500h15.400v23.200L16.5 23.200l-7.7 4.500z" fill="none" stroke="#d6d8d9" stroke-width="1.1"/></svg><span>Избранное</span></div>
<div class="tab" style="left:100px"><svg viewBox="0 0 32 32"><g fill="none" stroke="#d6d8d9" stroke-width="1.1"><rect x="4.5" y="4.5" width="9" height="9"/><rect x="18.5" y="4.5" width="9" height="9"/><rect x="4.5" y="18.5" width="9" height="9"/><rect x="18.5" y="18.5" width="9" height="9"/></g></svg><span>Приложения</span></div>
<div class="tab" style="left:193px"><svg viewBox="0 0 32 32"><g fill="none" stroke="#d6d8d9" stroke-width="1.1"><rect x="2.5" y="4.5" width="27" height="18"/><path d="M13.5 22.500v4.500M18.5 22.500v4.500M10 27.500h12"/></g></svg><span>Компьютер</span></div>
<div class="tab" style="left:286.500px"><svg viewBox="0 0 32 32"><g fill="none" stroke="#d6d8d9" stroke-width="1.1"><circle cx="16" cy="16" r="11.7"/><path d="M15.5 8v8.500H23"/></g></svg><span>Последние</span></div>
<div class="tab" style="left:380px"><svg viewBox="0 0 32 32"><g fill="none" stroke="#d6d8d9" stroke-width="1.1"><circle cx="16" cy="16" r="11.7"/><path d="M19.5 8.5 11 16l8.5 7.5"/></g></svg><span>Выход</span></div>

</div>
<div id="panel">
<!-- kickoff launcher -->
<svg class="abs" style="left:3.500px;top:3.200px" width="29" height="29" viewBox="-14.5 -14.5 29 29">
<circle r="14.3" fill="#ecedee"/>
<path d="M-4.85 5.58A7.40 7.40 0 0 1 -4.85 -5.58" fill="none" stroke="#3a3d40" stroke-width="1.60"/><path d="M-2.41 -7.00A7.40 7.40 0 0 1 7.26 -1.41" fill="none" stroke="#3a3d40" stroke-width="1.60"/><path d="M7.26 1.41A7.40 7.40 0 0 1 -2.41 7.00" fill="none" stroke="#3a3d40" stroke-width="1.60"/><path d="M-7.60 1.70L-11.40 1.20L-11.40 -1.20L-7.60 -1.70ZM-6.91 -3.58L-9.50 -6.41L-7.96 -8.25L-4.73 -6.19ZM-2.99 -7.19L-3.16 -11.02L-0.80 -11.44L0.35 -7.78ZM2.33 -7.43L4.66 -10.47L6.74 -9.27L5.27 -5.73ZM6.56 -4.20L10.30 -5.03L11.12 -2.77L7.72 -1.00ZM7.72 1.00L11.12 2.77L10.30 5.03L6.56 4.20ZM5.27 5.73L6.74 9.27L4.66 10.47L2.33 7.43ZM0.35 7.78L-0.80 11.44L-3.16 11.02L-2.99 7.19ZM-4.73 6.19L-7.96 8.25L-9.50 6.41L-6.91 3.58Z" fill="#3a3d40"/>
</svg>
<!-- task 1 -->
<div class="task" style="left:39px;background:#4b4d4f;letter-spacing:-.09px"><svg class="abs" style="left:7px;top:8px" width="18" height="18" viewBox="0 0 18 18"><path d="M11 1.500l5.3 3.9-5.3 3.9" fill="none" stroke="#f4f5f5" stroke-width="2.6"/><rect x="3.7" y="0" width="2.4" height="2.4" fill="#f4f5f5"/><circle cx="2.4" cy="7.5" r="1.7" fill="#f4f5f5"/><circle cx="7" cy="14.2" r="2.3" fill="#f4f5f5"/></svg><span style="left:32.500px">Настройка виджета «Папка рабо…</span></div>
<!-- task 2 (active) -->
<div class="task" style="left:298px;background:#5b5d5f;border-top:3px solid #6f7173;line-height:27px"><svg class="abs" style="left:5px;top:4px" width="22" height="19" viewBox="0 0 22 19"><path d="M1 1h8l2 2h10v7H1z" fill="#1463b4"/><path d="M2 4h18v5H2z" fill="#f6f8fa"/><path d="M1 7.500h6.500l2-2H21V18H1z" fill="url(#dfg)"/><path d="M1 17.200h20v.8H1z" fill="#165fb5"/></svg><span>Домашняя папка — Dolphin</span></div>
<!-- tray -->
<svg class="abs" style="left:1056px;top:9px" width="16" height="18" viewBox="0 0 16 18"><path d="M1.6 3.700h12.800v12.700H1.600z" fill="none" stroke="#f1f2f2" stroke-width="1.3"/><path d="M3.5 1h9v4.700h-9z" fill="#f1f2f2"/><path d="M3.8 7.500h8.200M3.8 10.500h6.200M3.8 13.500h3.3" stroke="#f1f2f2" stroke-width="1.1"/></svg>
<svg class="abs" style="left:1081px;top:9px" width="18" height="18" viewBox="0 0 18 18"><path d="M1 6h2.200v6H1z" fill="#f1f2f2"/><path d="M4 6.2 10.3.8v16.400L4 11.800z" fill="#f1f2f2"/><path d="M12 6.200a3.6 3.6 0 0 1 0 5.6" fill="none" stroke="#f1f2f2" stroke-width="1.5"/><path d="M13.2 2.400a8.6 8.6 0 0 1 0 13.2" fill="none" stroke="#84878a" stroke-width="1.3"/></svg>
<span class="abs" style="left:1107.500px;top:6.700px;font-size:16.800px;line-height:24px;letter-spacing:-.4px;color:#eff0f1">us</span>
<svg class="abs" style="left:1133px;top:9px" width="18" height="18" viewBox="0 0 18 18"><path d="M5.5 2.500h11v10h-11z" fill="none" stroke="#eff0f1"/><path d="M8 16.500h6M11 13v3" stroke="#eff0f1" stroke-width="1.4"/><rect x="1.5" y="1.5" width="3" height="5" fill="none" stroke="#eff0f1"/><path d="M3 7v6.500c0 2 1.5 3 3 3" fill="none" stroke="#eff0f1"/></svg>
<svg class="abs" style="left:1161px;top:14px" width="14" height="8" viewBox="0 0 14 8"><path d="M7 .5 13.5 7H.5z" fill="#eff0f1"/></svg>
<span class="abs" style="left:1184px;top:4.500px;font-size:23.400px;line-height:28px;color:#eff0f1">14:56</span>
<svg class="abs" style="left:1249px;top:6px" width="26" height="25" viewBox="0 0 26 25"><rect x="1" y="1" width="24" height="23" fill="none" stroke="#eff0f1" stroke-width="1.2"/><path d="M4.5 20h17.5" stroke="#eff0f1" stroke-width="1.2"/></svg>

</div>
</body>
</html>
